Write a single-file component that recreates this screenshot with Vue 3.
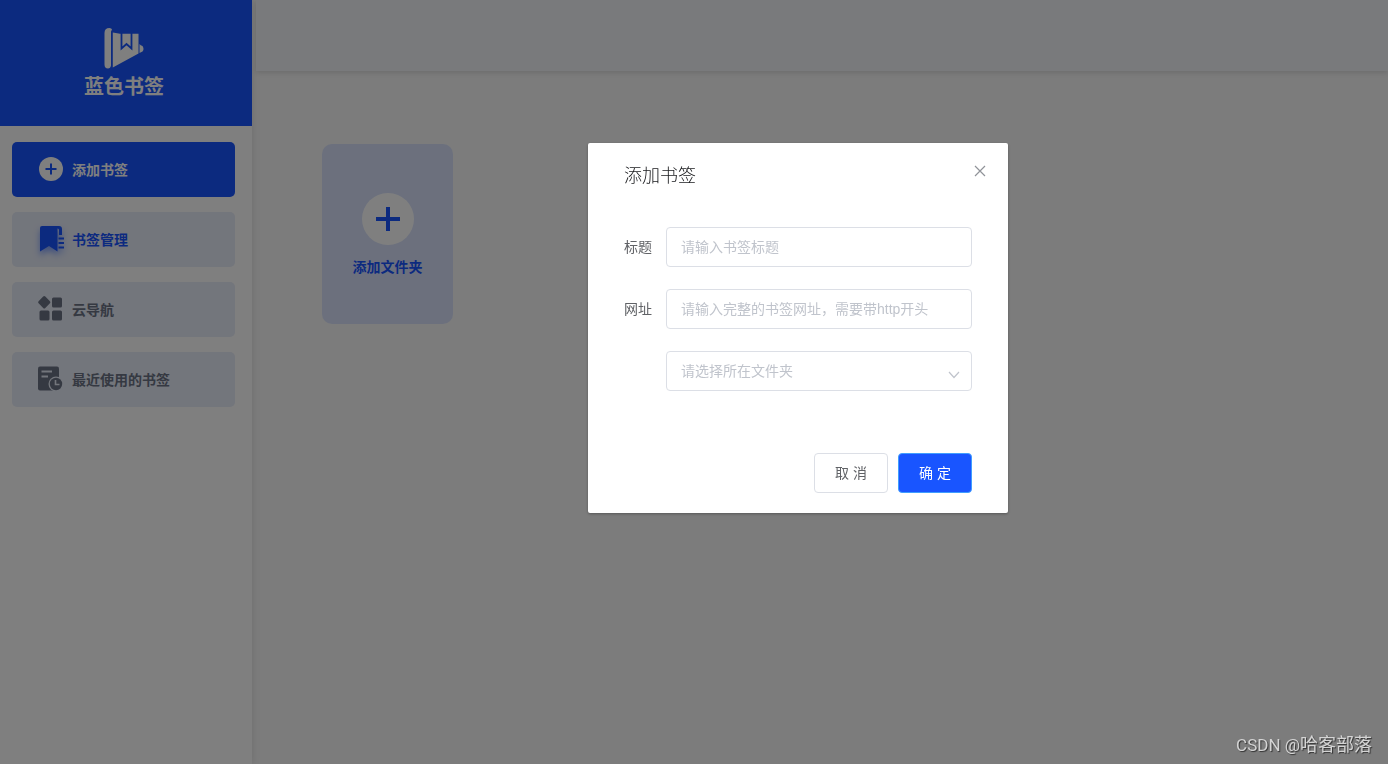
<script setup>
import { ref } from 'vue'

const visible = ref(true)
const title = ref('')
const url = ref('')
const folder = ref('')

const menu = [
  { icon: 'add', text: '添加书签', kind: 'primary' },
  { icon: 'bookmark', text: '书签管理', kind: 'current' },
  { icon: 'grid', text: '云导航', kind: '' },
  { icon: 'recent', text: '最近使用的书签', kind: '' }
]

function close() {
  visible.value = false
}
</script>

<template>
  <div class="page">
    <aside class="sidebar">
      <div class="brand">
        <svg class="brand-icon" width="42" height="42" viewBox="0 0 42 42" aria-hidden="true">
          <path d="M1.500 5Q1.500 0 6.500 0Q8.500 0 9 1.500L8 3.500V37.500Q7.500 40.500 5 40.500Q1.500 40.500 1.500 36.500Z" fill="#fff" />
          <path d="M9.800 4.500L17 5.800H35.500V25.500L9.800 39.500Z" fill="#fff" />
          <path d="M18.500 5V20.500L23.500 16L28.500 20.500V5" fill="none" stroke="#1955ff" stroke-width="1.800" />
          <path d="M36.500 16Q37.500 17.500 39.500 18Q41.500 21 39.500 23.500L36.500 25Z" fill="#fff" />
        </svg>
        <span class="brand-name">蓝色书签</span>
      </div>
      <nav class="menu">
        <button v-for="m in menu" :key="m.icon" type="button" class="menu-item" :class="m.kind">
          <svg v-if="m.icon === 'add'" class="menu-icon" width="26" height="26" viewBox="0 0 26 26" aria-hidden="true">
            <circle cx="13" cy="13" r="12" fill="#fff" />
            <path d="M13 7.500V18.500M7.500 13H18.500" stroke="#1955ff" stroke-width="2" />
          </svg>
          <svg v-else-if="m.icon === 'bookmark'" class="menu-icon glow" width="26" height="26" viewBox="0 0 26 26" aria-hidden="true">
            <path d="M2 2Q2 0 4 0H21Q24 0 24 3V9H21V4Q21 2.500 19.500 2.500V25.500L11 20L2 25.500Z" fill="#1955ff" />
            <path d="M20.500 12.500H26M20.500 17H26M20.500 21.500H26" stroke="#1955ff" stroke-width="2" />
          </svg>
          <svg v-else-if="m.icon === 'grid'" class="menu-icon" width="26" height="26" viewBox="0 0 26 26" fill="#6b7385" aria-hidden="true">
            <rect x="1.500" y="1.500" width="9.500" height="9.500" rx="1.500" transform="rotate(45 6.250 6.250)" />
            <rect x="14" y="1.500" width="10" height="10" rx="1.500" />
            <rect x="1.500" y="14.500" width="10" height="10" rx="1.500" />
            <rect x="14" y="14.500" width="10" height="10" rx="1.500" />
          </svg>
          <svg v-else class="menu-icon" width="26" height="26" viewBox="0 0 26 26" aria-hidden="true">
            <rect x="0" y="0.500" width="21" height="24" rx="2" fill="#6b7385" />
            <path d="M3.500 5.500H14M3.500 10.500H10" stroke="#e7ecf8" stroke-width="1.800" />
            <circle cx="18" cy="18" r="7.500" fill="#e7ecf8" />
            <circle cx="18" cy="18" r="6.200" fill="#6b7385" />
            <path d="M17.500 14V18.500H21.500" fill="none" stroke="#e7ecf8" stroke-width="1.600" />
          </svg>
          <span>{{ m.text }}</span>
        </button>
      </nav>
    </aside>

    <div class="content">
      <header class="topbar"></header>
      <main class="folders">
        <button type="button" class="folder-card">
          <svg width="52" height="52" viewBox="0 0 52 52" aria-hidden="true">
            <circle cx="26" cy="26" r="26" fill="#fff" />
            <path d="M26 14V38M14 26H38" stroke="#1955ff" stroke-width="4" />
          </svg>
          <span>添加文件夹</span>
        </button>
      </main>
    </div>

    <div v-if="visible" class="overlay">
      <form class="dialog" role="dialog" aria-labelledby="dialog-title" @submit.prevent="close">
        <div class="dialog-head">
          <h2 id="dialog-title">添加书签</h2>
          <button type="button" class="close" aria-label="关闭" @click="close">
            <svg width="12" height="12" viewBox="0 0 12 12" aria-hidden="true">
              <path d="M1 1L11 11M11 1L1 11" stroke="#909399" stroke-width="1.200" />
            </svg>
          </button>
        </div>
        <div class="fields">
          <label for="bm-title">标题</label>
          <input id="bm-title" v-model="title" class="control" type="text" placeholder="请输入书签标题">
          <label for="bm-url">网址</label>
          <input id="bm-url" v-model="url" class="control" type="text" placeholder="请输入完整的书签网址，需要带http开头">
          <div class="select-wrap">
            <select v-model="folder" class="control select" aria-label="所在文件夹">
              <option value="" disabled>请选择所在文件夹</option>
            </select>
            <svg class="arrow" width="12" height="8" viewBox="0 0 12 8" aria-hidden="true">
              <path d="M1 1L6 6.500L11 1" fill="none" stroke="#c0c4cc" stroke-width="1.200" />
            </svg>
          </div>
        </div>
        <div class="actions">
          <button type="button" class="btn" @click="close">取 消</button>
          <button type="submit" class="btn confirm">确 定</button>
        </div>
      </form>
    </div>

    <div class="watermark">CSDN @<span>哈客部落</span></div>
  </div>
</template>

<style>
body {
  background: #f8f8f8;
}
</style>

<style scoped>
.page,
.page * {
  box-sizing: border-box;
}

.page {
  display: flex;
  min-height: 100vh;
  font-family: "Liberation Sans", "Noto Sans CJK SC", sans-serif;
  font-size: 14px;
  line-height: 20px;
}

button,
input,
select {
  font: inherit;
  margin: 0;
}

button {
  cursor: pointer;
}

.sidebar {
  flex: 0 0 252px;
  background: #fff;
  box-shadow: 0 0 8px rgba(0, 0, 0, 0.12);
}

.brand {
  display: flex;
  flex-direction: column;
  align-items: center;
  height: 126px;
  padding-top: 28px;
  padding-right: 4px;
  background: #1955ff;
}

.brand-name {
  margin-top: 4px;
  color: #fff;
  font-size: 20px;
  font-weight: 700;
  line-height: 26px;
}

.menu {
  display: flex;
  flex-direction: column;
  gap: 15px;
  padding: 16px 17px 16px 12px;
}

.menu-item {
  display: flex;
  align-items: center;
  gap: 8px;
  height: 55px;
  padding: 0 26px;
  border: 0;
  border-radius: 5px;
  background: #e7ecf8;
  color: #6b7385;
  font-weight: 700;
}

.menu-item.primary {
  background: #1955ff;
  color: #fff;
}

.menu-item.current {
  color: #1955ff;
}

.menu-icon {
  flex: none;
  margin-bottom: 2px;
  overflow: visible;
}

.glow {
  filter: drop-shadow(0 4px 3px rgba(25, 85, 255, 0.5));
}

.content {
  flex: 1;
  min-width: 0;
}

.topbar {
  height: 71px;
  margin-left: 4px;
  background: #f3f5f8;
  box-shadow: 0 2px 5px rgba(0, 0, 0, 0.12);
}

.folders {
  display: flex;
  flex-wrap: wrap;
  padding: 73px 70px;
}

.folder-card {
  display: flex;
  flex-direction: column;
  align-items: center;
  gap: 12px;
  width: 131px;
  height: 180px;
  padding: 49px 0 0;
  border: 0;
  border-radius: 10px;
  background: #d8e1fb;
  color: #1955ff;
  font-weight: 700;
}

.overlay {
  position: fixed;
  inset: 0;
  display: flex;
  align-items: flex-start;
  justify-content: center;
  padding-top: 143px;
  padding-left: 208px;
  background: rgba(0, 0, 0, 0.5);
}

.dialog {
  width: 420px;
  padding: 20px 36px;
  border-radius: 2px;
  background: #fff;
  box-shadow: 0 1px 3px rgba(0, 0, 0, 0.3);
}

.dialog-head {
  display: flex;
  justify-content: space-between;
  margin-right: -16px;
}

.dialog-head h2 {
  margin: 0;
  color: #18191c;
  font-size: 18px;
  font-weight: 300;
  line-height: 26px;
}

.close {
  display: flex;
  align-items: center;
  justify-content: center;
  width: 16px;
  height: 16px;
  padding: 0;
  border: 0;
  background: none;
}

.fields {
  display: grid;
  grid-template-columns: 30px 1fr;
  align-items: center;
  gap: 22px 12px;
  margin-top: 38px;
  color: #606266;
}

.control {
  width: 100%;
  height: 40px;
  padding: 0 14px;
  border: 1px solid #dcdfe6;
  border-radius: 4px;
  outline: none;
  background: #fff;
  color: #606266;
}

.control::placeholder {
  color: #c0c4cc;
  opacity: 1;
}

.select-wrap {
  position: relative;
  grid-column: 2;
}

.select {
  display: block;
  appearance: none;
  color: #c0c4cc;
}

.arrow {
  position: absolute;
  top: 20px;
  right: 12px;
  pointer-events: none;
}

.actions {
  display: flex;
  justify-content: flex-end;
  gap: 10px;
  margin-top: 62px;
}

.btn {
  width: 74px;
  height: 40px;
  padding: 0;
  border: 1px solid #dcdfe6;
  border-radius: 4px;
  background: #fff;
  color: #606266;
}

.btn.confirm {
  border-color: #409eff;
  background: #1955ff;
  color: #fff;
}

.watermark {
  position: fixed;
  right: 16px;
  bottom: 8px;
  color: #d4d4d4;
  font-family: Roboto, "Noto Sans CJK SC", sans-serif;
  font-size: 17px;
  line-height: 22px;
  text-shadow: 1px 1px 1px rgba(0, 0, 0, 0.6);
}

.watermark span {
  font-size: 18px;
}
</style>
